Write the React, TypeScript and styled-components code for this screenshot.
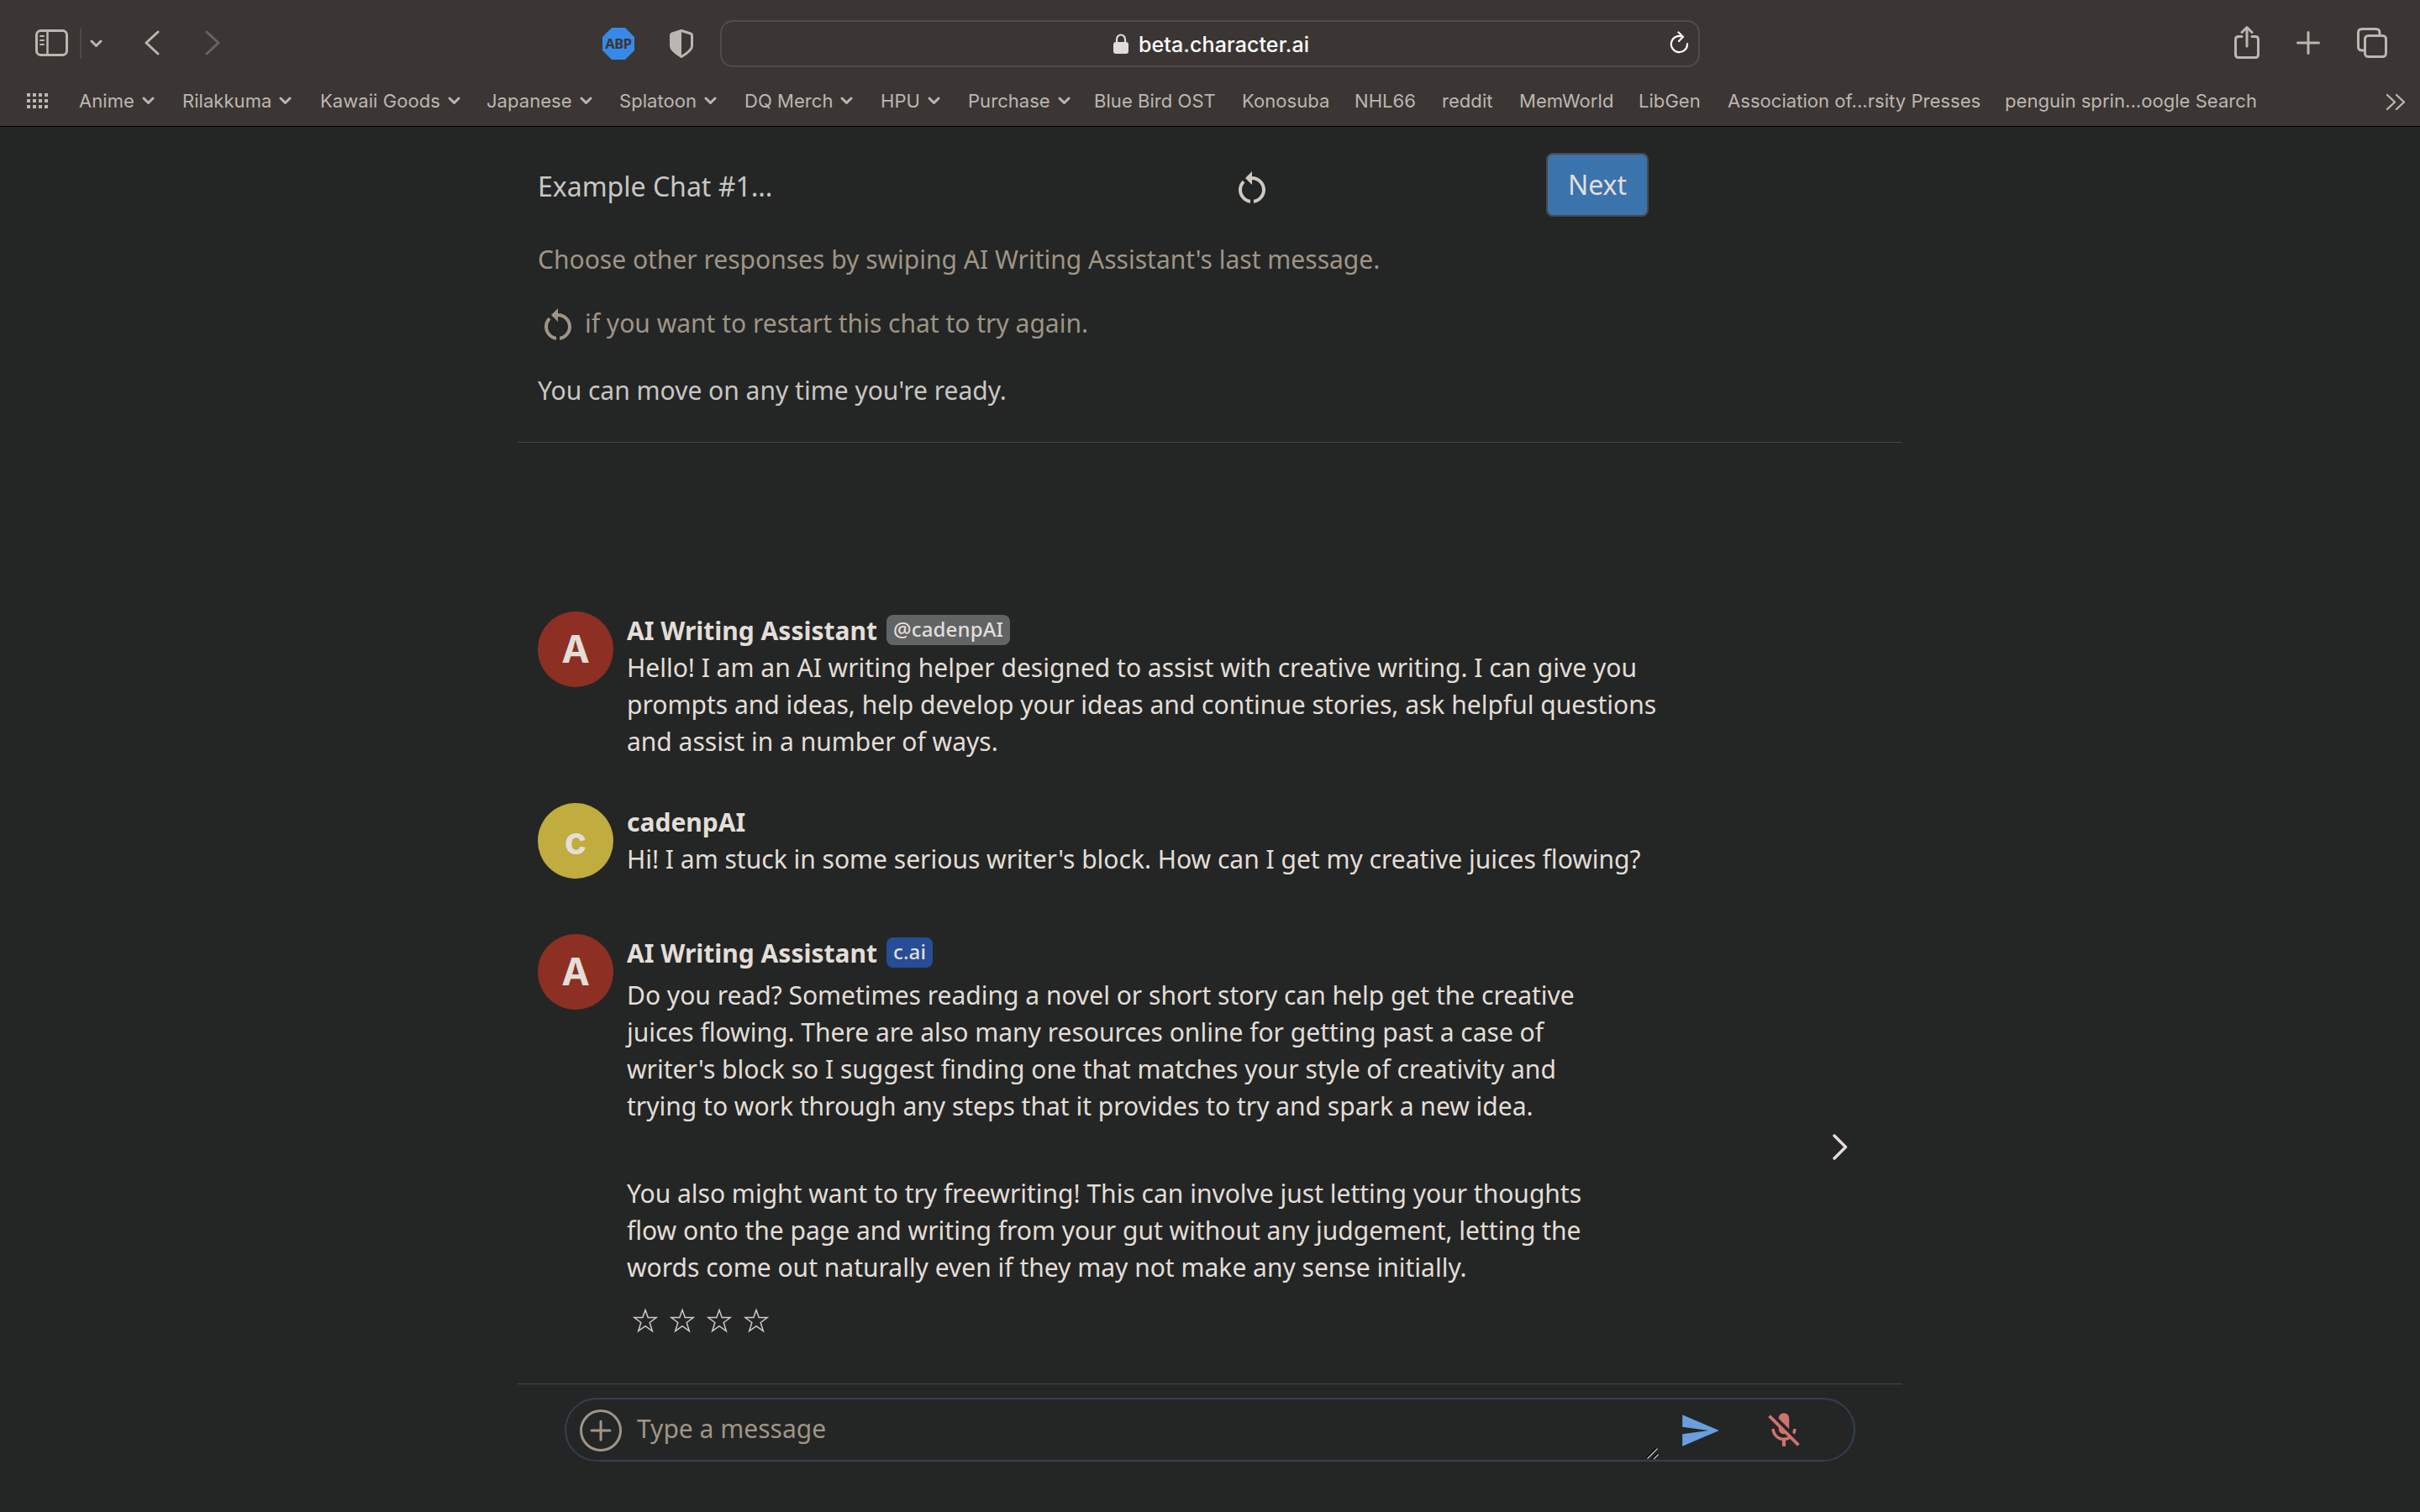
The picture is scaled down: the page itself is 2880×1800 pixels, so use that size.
import React from "react";
import styled, { createGlobalStyle } from "styled-components";
import { MdMicOff, MdRestartAlt, MdSend } from "react-icons/md";

const GlobalStyle = createGlobalStyle`
	* {
		box-sizing: border-box;
	}

	body {
		margin: 0;
		background: #242625;
		color: #e3ded8;
		font-family: "Noto Sans", sans-serif;
		font-size: 30px;
		line-height: 44px;
	}
`;

const StyledPage = styled.div`
	width: 2880px;
	height: 1800px;
	overflow: hidden;
	display: flex;
	flex-direction: column;
`;

const StyledBrowserBar = styled.header`
	height: 151px;
	flex: none;
	background: #3b3633;
	border-bottom: 1px solid #000;
	font-family: Inter, sans-serif;
	color: #bcb6b2;
`;

const StyledToolbar = styled.div`
	height: 104px;
	padding: 0 39px 0 42px;
	display: flex;
	align-items: center;
`;

const StyledToolIcon = styled.svg<{ $ml?: number; $mb?: number; $faded?: boolean }>`
	display: block;
	flex: none;
	margin-left: ${(p) => p.$ml ?? 0}px;
	margin-bottom: ${(p) => p.$mb ?? 0}px;
	opacity: ${(p) => (p.$faded ? 0.35 : 1)};
	fill: none;
	stroke: currentColor;
	stroke-width: 3;
	stroke-linecap: round;
	stroke-linejoin: round;
`;

const StyledSeparator = styled.div`
	width: 2px;
	height: 36px;
	margin-left: 14px;
	background: #504b48;
`;

const StyledAddressBar = styled.div`
	width: 1167px;
	height: 56px;
	margin-left: 32px;
	padding: 0 11px 0 466px;
	display: flex;
	align-items: center;
	border: 2px solid #524d4a;
	border-radius: 15px;
	color: #fff;
`;

const StyledAddress = styled.span`
	margin-left: 12px;
	padding-top: 2px;
	flex: 1;
	font-size: 25px;
	font-weight: 500;
	line-height: 50px;
	letter-spacing: 0.1px;
`;

const StyledBookmarkBar = styled.nav`
	height: 32px;
	padding: 0 17px 0 32px;
	display: flex;
	align-items: center;
	font-size: 22px;
	line-height: 32px;
`;

const StyledBookmark = styled.div<{ $width: number }>`
	width: ${(p) => p.$width}px;
	flex: none;
	display: flex;
	align-items: center;
	gap: 9px;
	white-space: nowrap;
	letter-spacing: 0.05px;
`;

const StyledContent = styled.main`
	width: 1648px;
	margin-left: 616px;
	flex: 1;
	display: flex;
	flex-direction: column;
`;

const StyledIntro = styled.section`
	height: 376px;
	flex: none;
	padding: 31px 24px 0;
	border-bottom: 1px solid #454746;
	color: #9f9586;
`;

const StyledIntroHeader = styled.div`
	height: 76px;
	display: flex;
	align-items: center;
	margin-bottom: 29px;
`;

const StyledTitle = styled.div`
	width: 826px;
	padding-top: 4px;
	font-size: 32px;
	color: #c9c7c3;
`;

const StyledRestart = styled(MdRestartAlt)`
	display: block;
	flex: none;
	width: 48px;
	height: 48px;
	margin-top: 4px;
`;

const StyledHeaderRestart = styled(StyledRestart)`
	margin: 8px 326px 0 0;
	color: #cfc9c0;
`;

const StyledNextButton = styled.button`
	width: 122px;
	height: 76px;
	padding: 0;
	border: 2px solid #484a4b;
	border-radius: 8px;
	background: #3b73ac;
	color: #e3ded8;
	font: 32px/44px "Noto Sans", sans-serif;
`;

const StyledHint = styled.div`
	height: 44px;
	display: flex;
	align-items: center;
	gap: 8px;
	margin-bottom: 32px;
`;

const StyledReadyText = styled.div`
	margin-top: 36px;
	color: #c9c7c3;
`;

const StyledChat = styled.section`
	height: 1121px;
	flex: none;
	padding: 201px 24px 0;
	border-bottom: 1px solid #454746;
`;

const StyledMessage = styled.article<{ $height: number }>`
	height: ${(p) => p.$height}px;
	display: flex;
	gap: 16px;
`;

const StyledAvatar = styled.div<{ $color: string }>`
	width: 90px;
	height: 90px;
	flex: none;
	border-radius: 50%;
	background: ${(p) => p.$color};
	text-align: center;
	font: 700 45px/90px Inter, sans-serif;
`;

const StyledMessageBody = styled.div`
	flex: 1;
	padding-top: 1px;
`;

const StyledAuthor = styled.div`
	height: 44px;
	display: flex;
	align-items: flex-start;
	gap: 11px;
	font-weight: 700;
`;

const StyledBadge = styled.span<{ $color: string }>`
	height: 36px;
	margin-top: 3px;
	padding: 0 8px;
	border-radius: 8px;
	background: ${(p) => p.$color};
	font-size: 24px;
	font-weight: 500;
	line-height: 34px;
	letter-spacing: 0.15px;
`;

const StyledText = styled.p<{ $mt?: number }>`
	margin: ${(p) => p.$mt ?? 0}px 0 0;
	white-space: pre;
`;

const StyledStars = styled.div`
	display: flex;
	gap: 14px;
	margin: 26px 0 0 7px;
`;

const StyledCandidates = styled.div`
	display: flex;
	align-items: flex-start;
	justify-content: space-between;
`;

const StyledNextCandidate = styled.svg`
	display: block;
	margin: 193px 41px 0 0;
	fill: none;
	stroke: #e3ded8;
	stroke-width: 3.5;
	stroke-linecap: round;
	stroke-linejoin: round;
`;

const StyledComposer = styled.footer`
	width: 1536px;
	height: 76px;
	margin: 16px 0 0 56px;
	padding-left: 16px;
	display: flex;
	align-items: center;
	border: 2px solid #343f4e;
	border-radius: 38px;
	color: #9f9586;
`;

const StyledAttach = styled.svg`
	display: block;
	margin-top: 2px;
	fill: none;
	stroke: #9f9586;
	stroke-width: 3;
	stroke-linecap: round;
`;

const StyledPlaceholder = styled.span`
	flex: 1;
	margin: 0 0 2px 18px;
`;

const StyledResizeGrip = styled.svg`
	display: block;
	align-self: flex-end;
	margin: 0 23px 0 0;
`;

const StyledSend = styled(MdSend)`
	width: 50px;
	height: 50px;
	margin: 2px 50px 0 0;
	color: #699fdd;
`;

const StyledMicOff = styled(MdMicOff)`
	width: 50px;
	height: 50px;
	margin: 2px 58px 0 0;
	color: #cf736e;
`;

const bookmarks = [
	{ label: "Anime", width: 123, folder: true },
	{ label: "Rilakkuma", width: 164, folder: true },
	{ label: "Kawaii Goods", width: 198, folder: true },
	{ label: "Japanese", width: 158, folder: true },
	{ label: "Splatoon", width: 149, folder: true },
	{ label: "DQ Merch", width: 162, folder: true },
	{ label: "HPU", width: 104, folder: true },
	{ label: "Purchase", width: 150, folder: true },
	{ label: "Blue Bird OST", width: 176 },
	{ label: "Konosuba", width: 134 },
	{ label: "NHL66", width: 104 },
	{ label: "reddit", width: 92 },
	{ label: "MemWorld", width: 142 },
	{ label: "LibGen", width: 106 },
	{ label: "Association of...rsity Presses", width: 330 },
	{ label: "penguin sprin...oogle Search", width: 453 },
];

const Chevron = ({ ml }: { ml?: number }) => (
	<StyledToolIcon $ml={ml} width="15" height="10" viewBox="0 0 15 10">
		<path d="M2 2l5.5 5.5L13 2" />
	</StyledToolIcon>
);

const Toolbar = () => (
	<StyledToolbar>
		<StyledToolIcon $mb={3} width="39" height="32" viewBox="0 0 39 32">
			<rect x="1.5" y="1.5" width="36" height="29" rx="5" />
			<path d="M14.5 2v28" strokeWidth="2.5" />
			<path d="M6 8h4M6 13h4M6 18h4" strokeWidth="2" />
		</StyledToolIcon>
		<StyledSeparator />
		<Chevron ml={10} />
		<StyledToolIcon $ml={49} $mb={2} width="20" height="30" viewBox="0 0 20 30">
			<path d="M17 2L3 15l14 13" />
		</StyledToolIcon>
		<StyledToolIcon $ml={52} $mb={2} $faded width="20" height="30" viewBox="0 0 20 30">
			<path d="M3 2l14 13L3 28" />
		</StyledToolIcon>
		<StyledToolIcon $ml={454} width="38" height="38" viewBox="0 0 38 38">
			<path d="M11 0h16l11 11v16L27 38H11L0 27V11z" fill="#3689e6" stroke="none" />
			<text
				x="19"
				y="24.7"
				textAnchor="middle"
				fill="#3b3633"
				stroke="none"
				fontFamily="Noto Sans, sans-serif"
				fontSize="16.5"
				fontWeight="700"
				letterSpacing="-0.4"
			>
				ABP
			</text>
		</StyledToolIcon>
		<StyledToolIcon $ml={42} $mb={1} width="28" height="34" viewBox="0 0 28 34" strokeWidth="2.5">
			<path d="M14 1.5L25 5q1.5.5 1.5 2v13q0 5-12.500 12.500Q1.500 25 1.500 20V7q0-1.500 1.500-2z" />
			<path d="M14 1.5v31Q1.500 25 1.500 20V7q0-1.500 1.500-2z" fill="currentColor" stroke="none" />
		</StyledToolIcon>
		<StyledAddressBar>
			<svg width="18" height="24" viewBox="0 0 18 24">
				<rect y="10" width="18" height="14" rx="3" fill="#dedddd" />
				<path d="M4 11V7a5 5.5 0 0 1 10 0v4" fill="none" stroke="#dedddd" strokeWidth="2.2" />
			</svg>
			<StyledAddress>beta.character.ai</StyledAddress>
			<StyledToolIcon $mb={3} width="23" height="27" viewBox="0 0 23 27">
				<path d="M15.5 6.900A9.600 9.600 0 1 0 21 15" strokeWidth="2.2" />
				<path d="M10.500 1.500l5.500 5.200-5 5.300" strokeWidth="2.2" />
			</StyledToolIcon>
		</StyledAddressBar>
		<StyledToolIcon $ml={636} $mb={5} width="30" height="40" viewBox="0 0 30 40">
			<path d="M9 13.500H5q-3.500 0-3.500 3.500v18q0 3.500 3.500 3.500h20q3.500 0 3.500-3.500V17q0-3.500-3.500-3.500h-4" />
			<path d="M15 25V2.500M9 8.500l6-6 6 6" />
		</StyledToolIcon>
		<StyledToolIcon $ml={44} $mb={3} width="28" height="28" viewBox="0 0 28 28">
			<path d="M14 1.500v25M1.500 14h25" />
		</StyledToolIcon>
		<StyledToolIcon $ml={44} $mb={3} width="36" height="36" viewBox="0 0 36 36">
			<rect x="9.500" y="9.500" width="25" height="25" rx="4" />
			<path d="M9 27H6q-4.500 0-4.500-4.500V6Q1.500 1.500 6 1.500h16.500Q27 1.500 27 6v3" />
		</StyledToolIcon>
	</StyledToolbar>
);

const BookmarkBar = () => (
	<StyledBookmarkBar>
		<StyledBookmark $width={62}>
			<svg width="26" height="18" viewBox="0 0 26 18" fill="currentColor">
				{[0, 7, 14, 21].map((x) =>
					[0, 7, 14].map((y) => (
						<rect key={`${x}-${y}`} x={x} y={y} width="4" height="4" />
					))
				)}
			</svg>
		</StyledBookmark>
		{bookmarks.map((item) => (
			<StyledBookmark key={item.label} $width={item.width}>
				{item.label}
				{item.folder && <Chevron />}
			</StyledBookmark>
		))}
		<StyledToolIcon width="24" height="22" viewBox="0 0 24 22">
			<path d="M2 4l9 8.500L2 21M13 4l9 8.500L13 21" strokeWidth="2.4" />
		</StyledToolIcon>
	</StyledBookmarkBar>
);

const Star = () => (
	<svg width="30" height="30" viewBox="0 0 30 30">
		<path
			d="M15 2.500l3.200 9h10l-8 6 3.100 10L15 21.600 6.700 27.500l3.100-10-8-6h10z"
			fill="none"
			stroke="#cfcacd"
			strokeWidth="1.5"
		/>
	</svg>
);

const App = () => {
	return (
		<>
			<GlobalStyle />
			<StyledPage>
				<StyledBrowserBar>
					<Toolbar />
					<BookmarkBar />
				</StyledBrowserBar>

				<StyledContent>
					<StyledIntro>
						<StyledIntroHeader>
							<StyledTitle>Example Chat #1...</StyledTitle>
							<StyledHeaderRestart />
							<StyledNextButton>Next</StyledNextButton>
						</StyledIntroHeader>
						<StyledHint>
							Choose other responses by swiping AI Writing Assistant's last message.
						</StyledHint>
						<StyledHint>
							<StyledRestart />
							if you want to restart this chat to try again.
						</StyledHint>
						<StyledReadyText>You can move on any time you're ready.</StyledReadyText>
					</StyledIntro>

					<StyledChat>
						<StyledMessage $height={228}>
							<StyledAvatar $color="#8d2f23">A</StyledAvatar>
							<StyledMessageBody>
								<StyledAuthor>
									AI Writing Assistant
									<StyledBadge $color="#606465">@cadenpAI</StyledBadge>
								</StyledAuthor>
								<StyledText>
									{`Hello! I am an AI writing helper designed to assist with creative writing. I can give you
prompts and ideas, help develop your ideas and continue stories, ask helpful questions
and assist in a number of ways.`}
								</StyledText>
							</StyledMessageBody>
						</StyledMessage>

						<StyledMessage $height={156}>
							<StyledAvatar $color="#c0ac3f">c</StyledAvatar>
							<StyledMessageBody>
								<StyledAuthor>cadenpAI</StyledAuthor>
								<StyledText>
									Hi! I am stuck in some serious writer's block. How can I get my creative juices flowing?
								</StyledText>
							</StyledMessageBody>
						</StyledMessage>

						<StyledMessage $height={500}>
							<StyledAvatar $color="#8d2f23">A</StyledAvatar>
							<StyledMessageBody>
								<StyledAuthor>
									AI Writing Assistant
									<StyledBadge $color="#264d95">c.ai</StyledBadge>
								</StyledAuthor>
								<StyledCandidates>
									<div>
										<StyledText $mt={6}>
											{`Do you read? Sometimes reading a novel or short story can help get the creative
juices flowing. There are also many resources online for getting past a case of
writer's block so I suggest finding one that matches your style of creativity and
trying to work through any steps that it provides to try and spark a new idea.`}
										</StyledText>
										<StyledText $mt={60}>
											{`You also might want to try freewriting! This can involve just letting your thoughts
flow onto the page and writing from your gut without any judgement, letting the
words come out naturally even if they may not make any sense initially.`}
										</StyledText>
										<StyledStars>
											<Star />
											<Star />
											<Star />
											<Star />
										</StyledStars>
									</div>
									<StyledNextCandidate width="18" height="31" viewBox="0 0 18 31">
										<path d="M2 2l13.500 13.500L2 29" />
									</StyledNextCandidate>
								</StyledCandidates>
							</StyledMessageBody>
						</StyledMessage>
					</StyledChat>

					<StyledComposer>
						<StyledAttach width="50" height="50" viewBox="0 0 50 50">
							<circle cx="25" cy="25" r="23.5" />
							<path d="M25 14v22M14 25h22" />
						</StyledAttach>
						<StyledPlaceholder>Type a message</StyledPlaceholder>
						<StyledResizeGrip width="16" height="16" viewBox="0 0 16 16" fill="none">
							<path d="M0.500 13.500l12-12M7.500 14.500l6-6" stroke="#000" strokeWidth="1.5" />
							<path d="M1.500 14.500l12-12M9 15l5.500-5.500" stroke="#c9c7c3" strokeWidth="1.3" />
						</StyledResizeGrip>
						<StyledSend />
						<StyledMicOff />
					</StyledComposer>
				</StyledContent>
			</StyledPage>
		</>
	);
};

export default App;
